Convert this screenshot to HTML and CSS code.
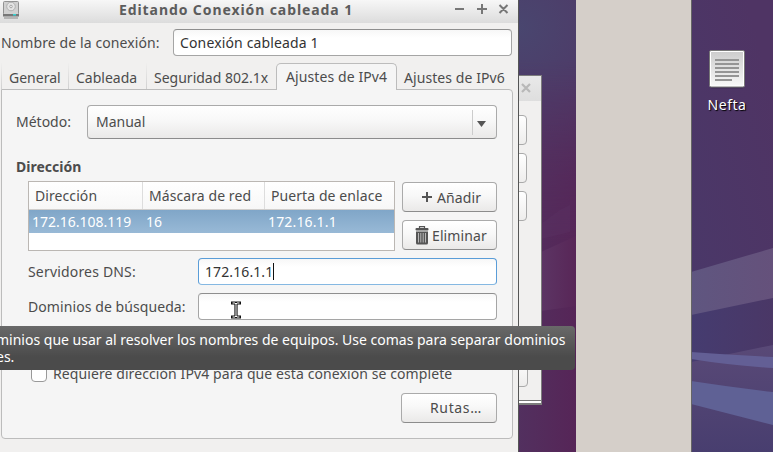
FILE: index.html
```html
<!DOCTYPE html>
<html lang="es">
<head>
<meta charset="utf-8">
<title>Editando Conexión cableada 1</title>
<link rel="stylesheet" href="styles.css">
</head>
<body>
<div class="desktop">
  <svg class="wallpaper" width="773" height="452" viewBox="0 0 773 452">
    <defs>
      <radialGradient id="w1" gradientUnits="userSpaceOnUse" cx="518" cy="28" r="165">
        <stop offset="0" stop-color="#49466f"/><stop offset=".5" stop-color="#4e3b68"/><stop offset="1" stop-color="#53305f"/>
      </radialGradient>
      <linearGradient id="w2" x1="0" x2="1"><stop offset="0" stop-color="#52305f"/><stop offset="1" stop-color="#562557"/></linearGradient>
      <linearGradient id="fade" x1="0" y1="0" x2="0" y2="1"><stop offset="0" stop-color="#fff" stop-opacity="0"/><stop offset="1" stop-color="#fff"/></linearGradient>
      <mask id="m"><rect x="518" y="60" width="58" height="190" fill="url(#fade)"/><rect x="518" y="249" width="58" height="203" fill="#fff"/></mask>
      <linearGradient id="w3" x1=".7" y1="0" x2="0" y2="1"><stop offset="0" stop-color="#4f3464"/><stop offset="1" stop-color="#48396a"/></linearGradient>
      <linearGradient id="w4" x1="0" x2="1"><stop offset="0" stop-color="#5f5680"/><stop offset="1" stop-color="#65517b"/></linearGradient>
      <linearGradient id="w5" x1="0" x2="1"><stop offset="0" stop-color="#453c70"/><stop offset="1" stop-color="#4a3766"/></linearGradient>
      <linearGradient id="w6" x1="0" y1="0" x2="0" y2="1"><stop offset="0" stop-color="#594977"/><stop offset="1" stop-color="#483e6f"/></linearGradient>
      <linearGradient id="w7" x1="0" x2="1"><stop offset="0" stop-color="#5c3564"/><stop offset="1" stop-color="#582657"/></linearGradient>
    </defs>
    <rect x="518" width="58" height="452" fill="url(#w1)"/>
    <rect x="518" width="58" height="452" fill="url(#w2)" mask="url(#m)"/>
    <path d="M541 224L560 210 570 205V232L541 239Z" fill="#5d3565" opacity=".35"/>
    <path d="M541 252L576 236V306L541 311Z" fill="url(#w7)"/>
    <rect x="691" width="82" height="452" fill="url(#w3)"/>
    <path d="M691 272L773 248V452H691Z" fill="url(#w4)"/>
    <path d="M691 315L773 298V452H691Z" fill="url(#w5)"/>
    <path d="M691 362L773 345V452H691Z" fill="url(#w6)"/>
    <path d="M691 352Q730 355 773 357V368Q727 365 691 359Z" fill="#635f95"/>
    <path d="M691 381Q730 387 773 392V425L691 404Z" fill="#5f6195"/>
  </svg>

  <div class="strip"></div>

  <div class="shortcut">
    <svg width="38" height="41" viewBox="0 0 38 41">
      <defs><linearGradient id="doc" x1="0" y1="0" x2="0" y2="1"><stop offset="0" stop-color="#cdcdcd"/><stop offset="1" stop-color="#f7f7f7"/></linearGradient></defs>
      <rect x="2" y="3" width="34" height="36.5" rx="2" fill="#20172e" opacity=".35"/>
      <rect x="1.5" y="1.5" width="35" height="36.5" rx="1.5" fill="#fff" stroke="#777"/>
      <rect x="3" y="3" width="32" height="33.5" fill="url(#doc)"/>
      <path d="M7 11h24M7 15h24M7 19h24M7 23h24M7 27h24M7 31h17" stroke="#959595" stroke-width="2"/>
    </svg>
    <span class="shortcut-name">Nefta</span>
  </div>

  <div class="back-window">
    <div class="back-title"><svg width="10" height="10" viewBox="0 0 10 10"><path d="M1 1l8 8M9 1l-8 8" stroke="#b8b8b8" stroke-width="2.2"/></svg></div>
    <div class="back-body">
      <div class="back-buttons"><i></i><i></i><i></i></div>
      <i class="back-close"></i>
    </div>
    <div class="back-foot"></div>
  </div>

  <div class="window">
    <div class="titlebar">
      <svg class="app-icon" width="18" height="19" viewBox="0 0 18 19">
        <rect x="1.5" y="1.5" width="15" height="13" rx="1" fill="#d0d0d0" stroke="#929292"/>
        <path d="M1 14h16v2.500H1z" fill="#777"/>
        <circle cx="9" cy="6.500" r="4.300" fill="#e4e4e4" stroke="#b0b0b0"/>
        <circle cx="9" cy="6.500" r="1.300" fill="#eee" stroke="#999" stroke-width=".8"/>
        <rect x="11" y="14" width="3" height="1.500" fill="#35d5d5"/>
        <path d="M2 18h14" stroke="#888"/>
      </svg>
      <h1 class="title">Editando Conexión cableada 1</h1>
      <div class="controls">
        <svg width="58" height="12" viewBox="0 0 58 12"><path d="M2 6h9M24 6h10M29 1v10M46.500 2l8 8M54.500 2l-8 8" stroke="#777" stroke-width="2"/></svg>
      </div>
    </div>

    <div class="name-row"><span class="t-name">Nombre de la conexión:</span><div class="entry"><span class="t-value">Conexión cableada 1</span></div></div>

    <div class="tabs">
      <span class="tab tab-general">General</span>
      <span class="tab tab-cable">Cableada</span>
      <span class="tab tab-sec">Seguridad 802.1x</span>
      <span class="tab tab-v4">Ajustes de IPv4</span>
      <span class="tab tab-v6">Ajustes de IPv6</span>
    </div>

    <div class="panel">
      <div class="method-row">
        <span>Método:</span>
        <div class="combo"><span class="t-manual">Manual</span><span class="arrow"><svg width="9" height="6" viewBox="0 0 9 6"><path d="M0 0h9L4.500 6z" fill="#555"/></svg></span></div>
      </div>
      <h2 class="heading">Dirección</h2>
      <div class="address">
        <div class="table">
          <div class="row head"><span>Dirección</span><span>Máscara de red</span><span>Puerta de enlace</span></div>
          <div class="row selected"><span>172.16.108.119</span><span>16</span><span class="c-gate">172.16.1.1</span></div>
        </div>
        <div class="actions">
          <div class="button add"><svg width="10" height="10" viewBox="0 0 10 10"><path d="M0 5h10M5 0v10" stroke="#555" stroke-width="2"/></svg><span>Añadir</span></div>
          <div class="button remove"><svg width="14" height="19" viewBox="0 0 14 19"><path d="M4.500 2V.7h5V2" fill="none" stroke="#555" stroke-width="1.200"/><rect x=".5" y="2" width="13" height="2.500" rx="1" fill="#555"/><path d="M1 5.500h12V17q0 1.500-1.500 1.500h-9Q1 18.500 1 17z" fill="#555"/><path d="M3.500 7v9.500M5.800 7v9.500M8.200 7v9.500M10.500 7v9.500" stroke="#c4c4c4" stroke-width=".9"/></svg><span>Eliminar</span></div>
        </div>
      </div>
      <div class="field dns"><span>Servidores DNS:</span><div class="entry focus"><span class="t-dnsval">172.16.1.1</span><i class="caret"></i></div></div>
      <div class="field domains"><span>Dominios de búsqueda:</span><div class="entry"></div></div>
      <div class="check-row"><i class="check"></i><span class="t-check">Requiere dirección IPv4 para que esta conexión se complete</span></div>
      <div class="button routes"><span class="t-routes">Rutas…</span></div>
    </div>
  </div>

  <svg class="pointer" width="10" height="18" viewBox="0 0 10 18"><path d="M1.500 2h2.500l1 1 1-1h2.500M5 3v12M1.500 16h2.500l1-1 1 1h2.500" fill="none" stroke="#111" stroke-width="3.200" stroke-linecap="square"/><path d="M1.500 2h2.500l1 1 1-1h2.500M5 3v12M1.500 16h2.500l1-1 1 1h2.500" fill="none" stroke="#fff" stroke-width="1"/></svg>

  <div class="tooltip"><span>minios que usar al resolver los nombres de equipos. Use comas para separar dominios</span><span>es.</span></div>
</div>
</body>
</html>
```
FILE: styles.css
```css
* { box-sizing: border-box; }
body {
  margin: 0;
  overflow: hidden;
  font: 14px/18px "Noto Sans", "Open Sans", sans-serif;
  color: #4c4c4c;
}
h1, h2 { margin: 0; font: inherit; font-weight: 700; }
svg { display: block; flex: none; }
span { white-space: nowrap; }

.desktop { position: relative; width: 773px; height: 452px; overflow: hidden; background: #52305f; }
.wallpaper { position: absolute; left: 0; top: 0; }
.strip { position: absolute; left: 576px; top: 0; width: 116px; height: 452px; background: #d5cfc9; border-right: 1px solid #666; }

.shortcut { position: absolute; left: 692px; top: 49px; width: 70px; display: flex; flex-direction: column; align-items: center; gap: 6px; }
.shortcut-name { color: #fff; letter-spacing: .5px; text-shadow: 1px 1px 1px #000; }

/* Window partly hidden behind the dialog */
.back-window { position: absolute; left: 500px; top: 75px; width: 42px; height: 330px; background: #f1f0ef; border: 1px solid #7d7d7d; border-bottom-width: 2px; display: flex; flex-direction: column; }
.back-title { height: 25px; display: flex; align-items: center; justify-content: flex-end; padding: 0 10px 2px 0; background: linear-gradient(#e9e9e9, #dedede); }
.back-body { flex: 1; display: flex; flex-direction: column; justify-content: space-between; padding: 14px 14px 13px 0; }
.back-buttons { display: flex; flex-direction: column; gap: 8px; }
.back-body i { display: block; height: 30px; border: 1px solid #aaa; border-radius: 4px; background: linear-gradient(#fff, #eeedec); }
.back-body .back-close { margin-right: -1px; }
.back-foot { height: 3px; border-top: 1px solid #777; background: #fff; }

/* Dialog */
.window { position: absolute; left: 0; top: 0; width: 519px; height: 452px; background: #f1f0ef; border-right: 1px solid #555; }
.titlebar { height: 23px; display: flex; align-items: flex-start; background: linear-gradient(#f7f7f7, #dcdcdc); }
.app-icon { margin-left: 2px; }
.title { width: 431px; padding-left: 99px; color: #5c5c5c; white-space: nowrap; line-height: 19px; letter-spacing: .91px; }
.controls { padding-top: 3px; margin-left: 2px; }

.name-row { height: 40px; padding: 6px 6px 0 1px; display: flex; align-items: flex-start; }
.name-row > span { width: 172px; line-height: 27px; letter-spacing: .1px; }
.t-value { letter-spacing: .14px; }
.entry { height: 27px; border: 1px solid #a5a5a5; border-top-color: #8e8e8e; border-radius: 4px; background: linear-gradient(#f7f7f7, #fff 8px); padding-left: 6px; display: flex; align-items: center; color: #333; }
.name-row .entry { width: 339px; }

.tabs { height: 26px; display: flex; padding-left: 1px; margin-bottom: -1px; align-items: flex-end; }
.tab { height: 26px; padding: 6px 0 0 7px; border-left: 1px solid; border-image: linear-gradient(#f1f0ef, #cfcfcf) 1; }
.tab-general { width: 67px; }
.tab-cable { width: 78px; }
.tab-sec { width: 130px; }
.tab-v4 { position: relative; z-index: 1; width: 121px; height: 27px; margin-bottom: -1px; padding: 4px 0 0 9px; border: 1px solid #bcbcbc; border-bottom: 0; border-image: none; border-radius: 5px 5px 0 0; background: #f5f5f5; letter-spacing: .1px; }
.tab-v6 { width: 115px; padding-left: 7px; border-left: 0; border-image: none; letter-spacing: .08px; }

.panel { width: 512px; height: 350px; margin-left: 1px; margin-top: 1px; border: 1px solid #bcbcbc; border-radius: 0 4px 4px 4px; background: #f5f5f5; padding: 15px 15px 0 14px; display: flex; flex-direction: column; }
.method-row { display: flex; height: 34px; align-items: center; }
.method-row > span { width: 71px; }
.combo, .button { border: 1px solid #aaa; border-bottom-color: #8c8c8c; border-radius: 4px; background: linear-gradient(#fff, #f8f8f8 45%, #eae9e8); display: flex; align-items: center; }
.combo { width: 410px; height: 34px; justify-content: space-between; padding-left: 8px; }
.arrow { width: 24px; height: 25px; border-left: 1px solid #ccc; display: flex; align-items: center; padding: 3px 0 0 4px; }
.heading { margin-top: 18px; height: 20px; line-height: 20px; }

.address { display: flex; gap: 7px; margin: 4px 0 0 12px; }
.table { width: 367px; height: 70px; background: #fff; border: 1px solid #bbb7b3; }
.row { display: grid; grid-template-columns: 113px 122px 1fr; align-items: center; }
.head { height: 28px; background: linear-gradient(#fff, #f7f7f7); border-bottom: 1px solid #d0cecc; letter-spacing: .08px; }
.head span { height: 27px; line-height: 27px; padding-left: 6px; }
.head span + span { border-left: 1px solid #ddd; }
.selected { height: 23px; line-height: 23px; color: #fff; background: linear-gradient(#80a6c8, #98b9d6); }
.selected span { padding-left: 3px; }
.selected span + span { padding-left: 4px; }
.selected .c-gate { letter-spacing: .15px; }
.actions { display: flex; flex-direction: column; gap: 8px; padding-top: 1px; }
.button { width: 95px; height: 30px; }
.button span { padding-top: 1px; letter-spacing: .1px; }
.add { padding-left: 19px; gap: 5px; }
.remove { padding-left: 12px; gap: 3px; }

.field { display: flex; align-items: center; margin-left: 12px; height: 27px; }
.field > span { width: 170px; letter-spacing: .08px; }
.field .entry { width: 299px; }
.dns > span { letter-spacing: .18px; }
.dns { margin-top: 7px; }
.domains { margin-top: 8px; }
.entry.focus { border-color: #5a9dd8; border-bottom-color: #85b8e2; }
.t-dnsval { letter-spacing: .1px; }
.caret { width: 1px; height: 17px; background: #111; }
.check-row { display: flex; align-items: center; height: 18px; margin: 45px 0 0 15px; gap: 6px; }
.check { width: 16px; height: 16px; border: 1px solid #999; border-radius: 4px; background: #fff; }
.t-check { letter-spacing: .09px; }
.routes { width: 96px; margin: 10px 0 0 auto; padding-left: 28px; }
.routes .t-routes { padding-top: 0; letter-spacing: .65px; }

.pointer { position: absolute; left: 231px; top: 301px; }
.tooltip { position: absolute; left: -5px; top: 326px; width: 580px; height: 44px; padding: 5px 0 0 1px; border-radius: 4px; display: flex; flex-direction: column; line-height: 17px; color: #fff; background: linear-gradient(#696969, #4b4b4b 70%); }
```
